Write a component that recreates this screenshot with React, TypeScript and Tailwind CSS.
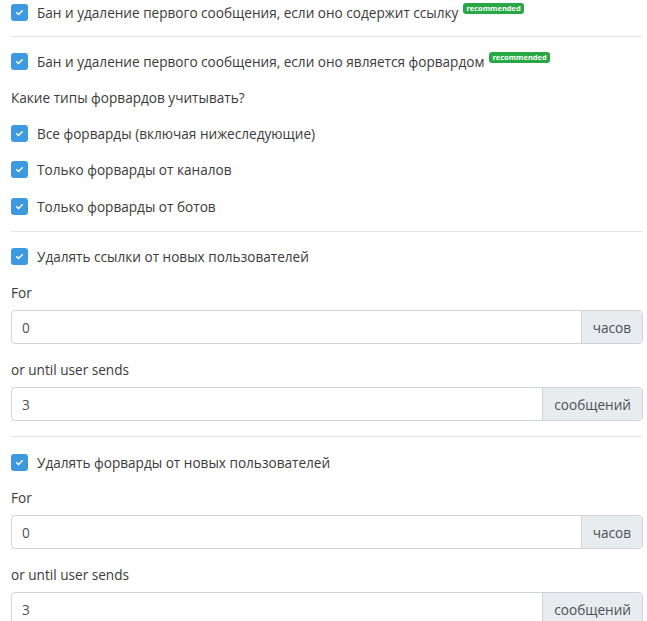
import type { ReactNode } from "react";

function Check({ children, badge }: { children: ReactNode; badge?: boolean }) {
  return (
    <label className="flex h-[21px] items-center">
      <span className="flex h-[17px] w-[17px] shrink-0 items-center justify-center rounded-[3px] bg-[#3d9ae0]">
        <svg viewBox="0 0 12 12" className="h-[9px] w-[9px]" fill="none">
          <path d="M2.3 6.3l2.4 2.3 5-5" stroke="#fff" strokeWidth="2" strokeLinecap="round" strokeLinejoin="round" />
        </svg>
      </span>
      <span className="ml-[9px] whitespace-nowrap">{children}</span>
      {badge && (
        <span className="mb-[8px] ml-[5px] rounded-[3px] bg-[#28a745] px-[3px] text-[7.5px] leading-[11px] font-bold text-white">
          recommended
        </span>
      )}
    </label>
  );
}

function Divider({ className }: { className: string }) {
  return <div className={`h-px bg-[#e3e3e3] ${className}`} />;
}

function Field({ value, unit }: { value: string; unit: string }) {
  return (
    <div className="flex h-[34px] w-full rounded-[4px] border border-[#ced4da] text-[#495057]">
      <div className="flex flex-1 items-center pl-[10px]">{value}</div>
      <div className="flex items-center rounded-r-[3px] border-l border-[#ced4da] bg-[#e9ecef] px-[11px]">
        {unit}
      </div>
    </div>
  );
}

export default function App() {
  return (
    <div
      className="min-h-screen bg-white pt-[2px] pr-[4px] pl-[11px] text-[13.6px] leading-[21px] text-[#3a3a3a]"
      style={{ fontFamily: '"Open Sans", "Noto Sans", sans-serif' }}
    >
      <div className="mb-[13px]">
        <Check badge>Бан и удаление первого сообщения, если оно содержит ссылку</Check>
      </div>
      <Divider className="mb-[14px]" />
      <div className="mb-[15px]">
        <Check badge>Бан и удаление первого сообщения, если оно является форвардом</Check>
      </div>
      <p className="mb-[15px]">Какие типы форвардов учитывать?</p>
      <div className="mb-[15px]">
        <Check>Все форварды (включая нижеследующие)</Check>
      </div>
      <div className="mb-[16px]">
        <Check>Только форварды от каналов</Check>
      </div>
      <div className="mb-[14px]">
        <Check>Только форварды от ботов</Check>
      </div>
      <Divider className="mb-[14px]" />

      <div className="mb-[15px]">
        <Check>Удалять ссылки от новых пользователей</Check>
      </div>
      <p className="mb-[7px]">For</p>
      <div className="mb-[15px]">
        <Field value="0" unit="часов" />
      </div>
      <p className="mb-[7px]">or until user sends</p>
      <div className="mb-[15px]">
        <Field value="3" unit="сообщений" />
      </div>
      <Divider className="mb-[15px]" />

      <div className="mb-[14px]">
        <Check>Удалять форварды от новых пользователей</Check>
      </div>
      <p className="mb-[7px]">For</p>
      <div className="mb-[15px]">
        <Field value="0" unit="часов" />
      </div>
      <p className="mb-[7px]">or until user sends</p>
      <div className="mb-[15px]">
        <Field value="3" unit="сообщений" />
      </div>
    </div>
  );
}
